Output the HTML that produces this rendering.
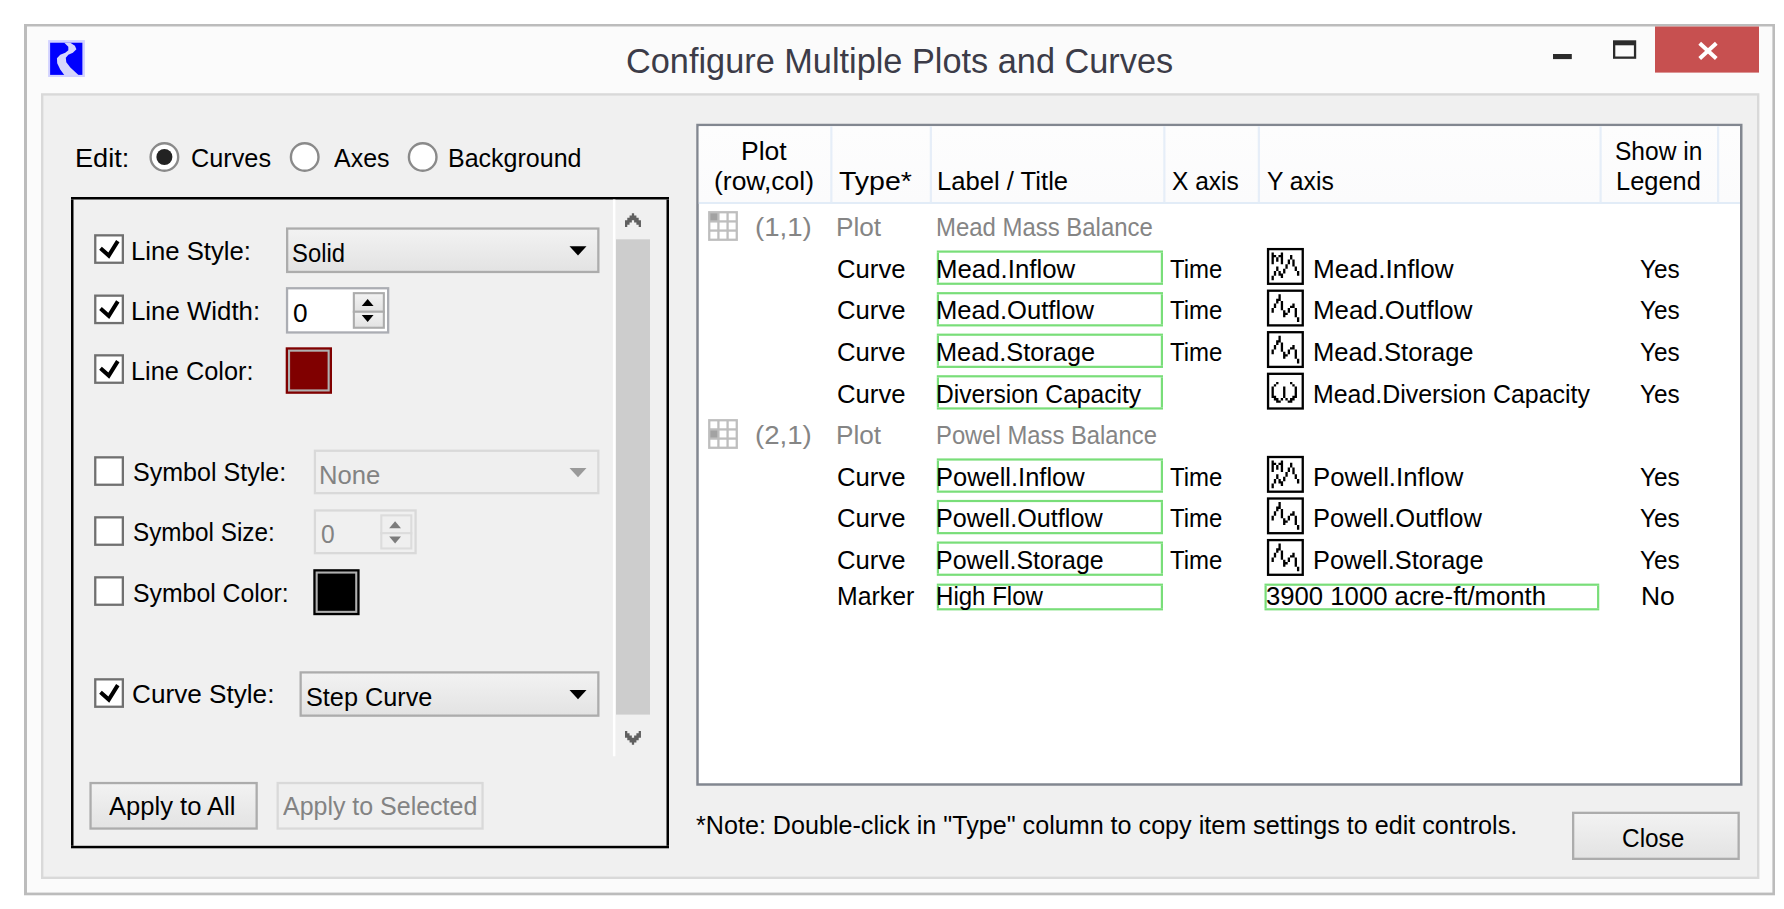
<!DOCTYPE html>
<html lang="en"><head><meta charset="utf-8"><title>Configure Multiple Plots and Curves</title>
<style>
html,body{margin:0;padding:0;background:#fff}
body{width:1784px;height:909px;position:relative;overflow:hidden;font-family:"Liberation Sans",sans-serif}
#w{position:absolute;left:0;top:0;width:1784px;height:909px;background:#fff}
svg{position:absolute;left:0;top:0;display:block}
.t{position:absolute;display:block;white-space:pre;line-height:1;font-size:26px;color:#000;transform-origin:0 0}
</style></head><body>
<div id="w"><svg width="1784" height="909" viewBox="0 0 1784 909">
<defs><linearGradient id="bg" x1="0" y1="0" x2="0" y2="1"><stop offset="0" stop-color="#f2f2f2"/><stop offset="1" stop-color="#e3e3e3"/></linearGradient>
<linearGradient id="hd" x1="0" y1="0" x2="0" y2="1"><stop offset="0" stop-color="#fdfdfd"/><stop offset="1" stop-color="#fbfbfc"/></linearGradient>
</defs>
<rect x="24.00" y="24.00" width="1751.00" height="871.30" fill="#bcbcbc"/>
<rect x="27.00" y="26.50" width="1745.40" height="866.10" fill="#fbfbfb"/>
<rect x="41.00" y="93.20" width="1718.40" height="785.80" fill="#d9d9d9"/>
<rect x="43.40" y="95.60" width="1713.60" height="781.00" fill="#f0f0f0"/>
<g transform="translate(48.1,40.1) scale(0.05055)"><rect width="728" height="730" fill="#d2d2ff"/><rect x="40" y="52" width="638" height="636" fill="#0000fe"/><path transform="translate(-160,-120)" d="M480,172 L600,172 L690,230 L720,300 L650,370 L560,410 L510,470 L520,560 L600,660 L760,808 L480,808 L400,700 L340,580 L335,480 L400,410 L500,370 L560,320 L560,250 Z" fill="#d6d6fc"/></g>
<rect x="1553.00" y="54.00" width="18.80" height="5.10" fill="#2b2b2b"/>
<rect x="1613.00" y="40.30" width="23.20" height="18.50" fill="#2b2b2b"/>
<rect x="1615.30" y="45.30" width="18.60" height="11.20" fill="#fbfbfb"/>
<rect x="1655.00" y="26.50" width="104.00" height="46.10" fill="#c75050"/>
<path d="M1699.7,43.3 L1716.3,58.5 M1716.3,43.3 L1699.7,58.5" stroke="#fff" stroke-width="4" fill="none"/>
<circle cx="164.4" cy="157" r="13.8" fill="#fff" stroke="#8a8a8a" stroke-width="2.4"/>
<circle cx="164.4" cy="157" r="8" fill="#222"/>
<circle cx="304.7" cy="157" r="13.8" fill="#fff" stroke="#8a8a8a" stroke-width="2.4"/>
<circle cx="422.7" cy="157" r="13.8" fill="#fff" stroke="#8a8a8a" stroke-width="2.4"/>
<rect x="71.00" y="197.00" width="598.00" height="2.50" fill="#000"/>
<rect x="71.00" y="845.80" width="598.00" height="2.50" fill="#000"/>
<rect x="71.00" y="199.50" width="2.50" height="646.30" fill="#000"/>
<rect x="666.50" y="199.50" width="2.50" height="646.30" fill="#000"/>
<rect x="612.90" y="199.50" width="2.50" height="556.80" fill="#fff"/>
<rect x="616.00" y="239.30" width="34.00" height="475.30" fill="#cdcdcd"/>
<path transform="translate(625.0,213.2) scale(2.28,2.31)" d="M3,0h1v1h1v1h1v1h1v3h-1v-1h-1v-1h-1v-1h-1v1h-1v1h-1v1h-1v-3h1v-1h1v-1h1z" fill="#606060"/>
<path transform="translate(625.0,744.8) scale(2.28,-2.31)" d="M3,0h1v1h1v1h1v1h1v3h-1v-1h-1v-1h-1v-1h-1v1h-1v1h-1v1h-1v-3h1v-1h1v-1h1z" fill="#606060"/>
<rect x="94.10" y="234.20" width="29.90" height="29.70" fill="#707070"/>
<rect x="96.40" y="236.50" width="25.30" height="25.10" fill="#fff"/>
<path transform="translate(94.1,234.20)" d="M6.4,14.0 L14.7,21.4 L23.7,6.9" stroke="#000" stroke-width="4" fill="none"/>
<rect x="286.00" y="227.40" width="313.50" height="45.70" fill="#acacac"/>
<rect x="288.30" y="229.70" width="308.90" height="41.10" fill="url(#bg)"/>
<path d="M569.50,246.25 h17 l-8.5,9.2 z" fill="#000"/>
<rect x="94.10" y="294.50" width="29.90" height="29.70" fill="#707070"/>
<rect x="96.40" y="296.80" width="25.30" height="25.10" fill="#fff"/>
<path transform="translate(94.1,294.50)" d="M6.4,14.0 L14.7,21.4 L23.7,6.9" stroke="#000" stroke-width="4" fill="none"/>
<rect x="285.90" y="287.10" width="103.40" height="46.50" fill="#abadb3"/>
<rect x="288.20" y="289.40" width="98.80" height="41.90" fill="#fff"/>
<rect x="352.80" y="292.10" width="32.10" height="20.80" fill="#acacac"/>
<rect x="354.90" y="294.20" width="27.90" height="16.60" fill="url(#bg)"/>
<rect x="352.80" y="310.70" width="32.10" height="18.10" fill="#acacac"/>
<rect x="354.90" y="312.80" width="27.90" height="13.90" fill="url(#bg)"/>
<path d="M361.75,306.00 h11.8 l-5.9,-6.9 z" fill="#000"/>
<path d="M361.75,315.10 h11.8 l-5.9,6.9 z" fill="#000"/>
<rect x="94.10" y="354.20" width="29.90" height="29.70" fill="#707070"/>
<rect x="96.40" y="356.50" width="25.30" height="25.10" fill="#fff"/>
<path transform="translate(94.1,354.20)" d="M6.4,14.0 L14.7,21.4 L23.7,6.9" stroke="#000" stroke-width="4" fill="none"/>
<rect x="285.70" y="347.30" width="46.30" height="46.50" fill="#800000"/>
<rect x="288.00" y="349.60" width="41.70" height="41.90" fill="#b0b0b0"/>
<rect x="290.10" y="351.70" width="37.50" height="37.70" fill="#800000"/>
<rect x="94.10" y="456.20" width="29.90" height="29.70" fill="#707070"/>
<rect x="96.40" y="458.50" width="25.30" height="25.10" fill="#fff"/>
<rect x="313.75" y="449.60" width="285.75" height="44.70" fill="#d9d9d9"/>
<rect x="316.05" y="451.90" width="281.15" height="40.10" fill="#efefef"/>
<path d="M569.50,467.95 h17 l-8.5,9.2 z" fill="#9a9a9a"/>
<rect x="94.10" y="516.20" width="29.90" height="29.70" fill="#707070"/>
<rect x="96.40" y="518.50" width="25.30" height="25.10" fill="#fff"/>
<rect x="313.75" y="509.30" width="103.00" height="45.00" fill="#d9d9d9"/>
<rect x="316.05" y="511.60" width="98.40" height="40.40" fill="#f0f0f0"/>
<rect x="380.25" y="514.30" width="32.10" height="20.05" fill="#dcdcdc"/>
<rect x="382.35" y="516.40" width="27.90" height="15.85" fill="#efefef"/>
<rect x="380.25" y="532.15" width="32.10" height="17.35" fill="#dcdcdc"/>
<rect x="382.35" y="534.25" width="27.90" height="13.15" fill="#efefef"/>
<path d="M389.20,528.20 h11.8 l-5.9,-6.9 z" fill="#7c7c7c"/>
<path d="M389.20,536.55 h11.8 l-5.9,6.9 z" fill="#7c7c7c"/>
<rect x="94.10" y="576.20" width="29.90" height="29.70" fill="#707070"/>
<rect x="96.40" y="578.50" width="25.30" height="25.10" fill="#fff"/>
<rect x="313.30" y="569.20" width="46.30" height="46.00" fill="#000"/>
<rect x="315.60" y="571.50" width="41.70" height="41.40" fill="#b0b0b0"/>
<rect x="317.70" y="573.60" width="37.50" height="37.20" fill="#000"/>
<rect x="94.10" y="678.20" width="29.90" height="29.70" fill="#707070"/>
<rect x="96.40" y="680.50" width="25.30" height="25.10" fill="#fff"/>
<path transform="translate(94.1,678.20)" d="M6.4,14.0 L14.7,21.4 L23.7,6.9" stroke="#000" stroke-width="4" fill="none"/>
<rect x="299.50" y="671.25" width="300.00" height="45.55" fill="#acacac"/>
<rect x="301.80" y="673.55" width="295.40" height="40.95" fill="url(#bg)"/>
<path d="M569.50,690.02 h17 l-8.5,9.2 z" fill="#000"/>
<rect x="89.40" y="781.90" width="168.40" height="47.80" fill="#acacac"/>
<rect x="91.70" y="784.20" width="163.80" height="43.20" fill="url(#bg)"/>
<rect x="276.50" y="781.90" width="207.20" height="47.80" fill="#d9d9d9"/>
<rect x="278.80" y="784.20" width="202.60" height="43.20" fill="#efefef"/>
<rect x="696.25" y="123.75" width="1046.25" height="662.00" fill="#828790"/>
<rect x="698.75" y="126.25" width="1041.25" height="657.00" fill="#fff"/>
<rect x="698.75" y="126.25" width="1041.25" height="75.95" fill="url(#hd)"/>
<rect x="698.75" y="202.00" width="1041.25" height="2.00" fill="#e2ecf7"/>
<rect x="830.25" y="126.25" width="2.20" height="75.85" fill="#e6eef8"/>
<rect x="929.75" y="126.25" width="2.20" height="75.85" fill="#e6eef8"/>
<rect x="1163.25" y="126.25" width="2.20" height="75.85" fill="#e6eef8"/>
<rect x="1257.75" y="126.25" width="2.20" height="75.85" fill="#e6eef8"/>
<rect x="1599.50" y="126.25" width="2.20" height="75.85" fill="#e6eef8"/>
<rect x="1717.00" y="126.25" width="2.20" height="75.85" fill="#e6eef8"/>
<g transform="translate(708.10,211.10) scale(2.2923)"><rect width="13" height="13" fill="#bebebe"/><rect x="1" y="1" width="3" height="3" fill="#a2a2a2"/><rect x="5" y="1" width="3" height="3" fill="#fff"/><rect x="9" y="1" width="3" height="3" fill="#fff"/><rect x="1" y="5" width="3" height="3" fill="#fff"/><rect x="5" y="5" width="3" height="3" fill="#fff"/><rect x="9" y="5" width="3" height="3" fill="#fff"/><rect x="1" y="9" width="3" height="3" fill="#fff"/><rect x="5" y="9" width="3" height="3" fill="#fff"/><rect x="9" y="9" width="3" height="3" fill="#fff"/></g>
<g transform="translate(708.10,419.10) scale(2.2923)"><rect width="13" height="13" fill="#bebebe"/><rect x="1" y="1" width="3" height="3" fill="#fff"/><rect x="5" y="1" width="3" height="3" fill="#fff"/><rect x="9" y="1" width="3" height="3" fill="#fff"/><rect x="1" y="5" width="3" height="3" fill="#a2a2a2"/><rect x="5" y="5" width="3" height="3" fill="#fff"/><rect x="9" y="5" width="3" height="3" fill="#fff"/><rect x="1" y="9" width="3" height="3" fill="#fff"/><rect x="5" y="9" width="3" height="3" fill="#fff"/><rect x="9" y="9" width="3" height="3" fill="#fff"/></g>
<rect x="936.80" y="250.50" width="226.20" height="2.20" fill="#79de79"/>
<rect x="936.80" y="282.65" width="226.20" height="2.20" fill="#79de79"/>
<rect x="936.80" y="252.70" width="2.20" height="29.95" fill="#79de79"/>
<rect x="1160.80" y="252.70" width="2.20" height="29.95" fill="#79de79"/>
<g transform="translate(1266.90,247.95) scale(2.3125)"><rect x="0.5" y="0.5" width="15" height="15" fill="#fff" stroke="#000"/><path d="M2,2h1v5h-1zM2,12h1v2h-1zM3,3h1v1h-1zM3,10h1v2h-1zM4,4h1v2h-1zM4,8h1v2h-1zM5,3h1v1h-1zM5,10h1v2h-1zM6,2h1v5h-1zM6,11h1v2h-1zM7,9h1v2h-1zM8,7h1v2h-1zM9,5h1v2h-1zM10,3h1v2h-1zM11,5h1v3h-1zM12,8h1v2h-1zM13,10h1v2h-1z"/></g>
<rect x="936.80" y="292.10" width="226.20" height="2.20" fill="#79de79"/>
<rect x="936.80" y="324.25" width="226.20" height="2.20" fill="#79de79"/>
<rect x="936.80" y="294.30" width="2.20" height="29.95" fill="#79de79"/>
<rect x="1160.80" y="294.30" width="2.20" height="29.95" fill="#79de79"/>
<g transform="translate(1266.90,289.55) scale(2.3125)"><rect x="0.5" y="0.5" width="15" height="15" fill="#fff" stroke="#000"/><path d="M2,8h1v2h-1zM3,6h1v2h-1zM4,4h1v2h-1zM5,2h1v3h-1zM6,5h1v4h-1zM7,9h1v3h-1zM8,10h1v1h-1zM9,8h1v2h-1zM10,7h1v1h-1zM11,6h1v2h-1zM12,8h1v4h-1zM13,12h1v2h-1z"/></g>
<rect x="936.80" y="333.60" width="226.20" height="2.20" fill="#79de79"/>
<rect x="936.80" y="365.75" width="226.20" height="2.20" fill="#79de79"/>
<rect x="936.80" y="335.80" width="2.20" height="29.95" fill="#79de79"/>
<rect x="1160.80" y="335.80" width="2.20" height="29.95" fill="#79de79"/>
<g transform="translate(1266.90,331.05) scale(2.3125)"><rect x="0.5" y="0.5" width="15" height="15" fill="#fff" stroke="#000"/><path d="M2,8h1v2h-1zM3,6h1v2h-1zM4,4h1v2h-1zM5,2h1v3h-1zM6,5h1v4h-1zM7,9h1v3h-1zM8,10h1v1h-1zM9,8h1v2h-1zM10,7h1v1h-1zM11,6h1v2h-1zM12,8h1v4h-1zM13,12h1v2h-1z"/></g>
<rect x="936.80" y="375.20" width="226.20" height="2.20" fill="#79de79"/>
<rect x="936.80" y="407.35" width="226.20" height="2.20" fill="#79de79"/>
<rect x="936.80" y="377.40" width="2.20" height="29.95" fill="#79de79"/>
<rect x="1160.80" y="377.40" width="2.20" height="29.95" fill="#79de79"/>
<g transform="translate(1266.90,372.65) scale(2.3125)"><rect x="0.5" y="0.5" width="15" height="15" fill="#fff" stroke="#000"/><path d="M2,6h1v5h-1zM3,5h1v1h-1zM3,10h1v2h-1zM4,4h1v1h-1zM4,11h1v2h-1zM5,12h1v1h-1zM6,11h1v1h-1zM7,6h1v5h-1zM8,11h1v1h-1zM9,12h1v1h-1zM10,4h1v1h-1zM10,11h1v2h-1zM11,5h1v1h-1zM11,10h1v2h-1zM12,6h1v5h-1z"/></g>
<rect x="936.80" y="458.40" width="226.20" height="2.20" fill="#79de79"/>
<rect x="936.80" y="490.55" width="226.20" height="2.20" fill="#79de79"/>
<rect x="936.80" y="460.60" width="2.20" height="29.95" fill="#79de79"/>
<rect x="1160.80" y="460.60" width="2.20" height="29.95" fill="#79de79"/>
<g transform="translate(1266.90,455.85) scale(2.3125)"><rect x="0.5" y="0.5" width="15" height="15" fill="#fff" stroke="#000"/><path d="M2,2h1v5h-1zM2,12h1v2h-1zM3,3h1v1h-1zM3,10h1v2h-1zM4,4h1v2h-1zM4,8h1v2h-1zM5,3h1v1h-1zM5,10h1v2h-1zM6,2h1v5h-1zM6,11h1v2h-1zM7,9h1v2h-1zM8,7h1v2h-1zM9,5h1v2h-1zM10,3h1v2h-1zM11,5h1v3h-1zM12,8h1v2h-1zM13,10h1v2h-1z"/></g>
<rect x="936.80" y="499.90" width="226.20" height="2.20" fill="#79de79"/>
<rect x="936.80" y="532.05" width="226.20" height="2.20" fill="#79de79"/>
<rect x="936.80" y="502.10" width="2.20" height="29.95" fill="#79de79"/>
<rect x="1160.80" y="502.10" width="2.20" height="29.95" fill="#79de79"/>
<g transform="translate(1266.90,497.35) scale(2.3125)"><rect x="0.5" y="0.5" width="15" height="15" fill="#fff" stroke="#000"/><path d="M2,8h1v2h-1zM3,6h1v2h-1zM4,4h1v2h-1zM5,2h1v3h-1zM6,5h1v4h-1zM7,9h1v3h-1zM8,10h1v1h-1zM9,8h1v2h-1zM10,7h1v1h-1zM11,6h1v2h-1zM12,8h1v4h-1zM13,12h1v2h-1z"/></g>
<rect x="936.80" y="541.50" width="226.20" height="2.20" fill="#79de79"/>
<rect x="936.80" y="573.65" width="226.20" height="2.20" fill="#79de79"/>
<rect x="936.80" y="543.70" width="2.20" height="29.95" fill="#79de79"/>
<rect x="1160.80" y="543.70" width="2.20" height="29.95" fill="#79de79"/>
<g transform="translate(1266.90,538.95) scale(2.3125)"><rect x="0.5" y="0.5" width="15" height="15" fill="#fff" stroke="#000"/><path d="M2,8h1v2h-1zM3,6h1v2h-1zM4,4h1v2h-1zM5,2h1v3h-1zM6,5h1v4h-1zM7,9h1v3h-1zM8,10h1v1h-1zM9,8h1v2h-1zM10,7h1v1h-1zM11,6h1v2h-1zM12,8h1v4h-1zM13,12h1v2h-1z"/></g>
<rect x="936.80" y="583.60" width="226.20" height="2.20" fill="#79de79"/>
<rect x="936.80" y="608.20" width="226.20" height="2.20" fill="#79de79"/>
<rect x="936.80" y="585.80" width="2.20" height="22.40" fill="#79de79"/>
<rect x="1160.80" y="585.80" width="2.20" height="22.40" fill="#79de79"/>
<rect x="1264.50" y="583.60" width="334.75" height="2.20" fill="#79de79"/>
<rect x="1264.50" y="608.20" width="334.75" height="2.20" fill="#79de79"/>
<rect x="1264.50" y="585.80" width="2.20" height="22.40" fill="#79de79"/>
<rect x="1597.05" y="585.80" width="2.20" height="22.40" fill="#79de79"/>
<rect x="1572.00" y="811.70" width="167.80" height="48.30" fill="#acacac"/>
<rect x="1574.30" y="814.00" width="163.20" height="43.70" fill="url(#bg)"/>
</svg>
<span class="t" style="left:625.88px;top:42.80px;transform:scaleX(0.9747);font-size:35.2px;color:#3c3c48">Configure Multiple Plots and Curves</span>
<span class="t" style="left:74.63px;top:145.09px;transform:scaleX(1.0435)">Edit:</span>
<span class="t" style="left:191.04px;top:145.09px;transform:scaleX(0.9720)">Curves</span>
<span class="t" style="left:333.55px;top:145.09px;transform:scaleX(0.9609)">Axes</span>
<span class="t" style="left:447.80px;top:145.09px;transform:scaleX(0.9622)">Background</span>
<span class="t" style="left:131.24px;top:238.09px;transform:scaleX(0.9885)">Line Style:</span>
<span class="t" style="left:292.48px;top:239.89px;transform:scaleX(0.9165)">Solid</span>
<span class="t" style="left:131.24px;top:297.89px;transform:scaleX(0.9925)">Line Width:</span>
<span class="t" style="left:293.42px;top:299.99px;transform:scaleX(1.0096)">0</span>
<span class="t" style="left:131.27px;top:357.59px;transform:scaleX(0.9741)">Line Color:</span>
<span class="t" style="left:132.57px;top:459.09px;transform:scaleX(0.9632)">Symbol Style:</span>
<span class="t" style="left:318.75px;top:461.59px;transform:scaleX(0.9863);color:#838383">None</span>
<span class="t" style="left:132.61px;top:519.19px;transform:scaleX(0.9345)">Symbol Size:</span>
<span class="t" style="left:321.48px;top:521.39px;transform:scaleX(0.9455);color:#838383">0</span>
<span class="t" style="left:132.58px;top:579.69px;transform:scaleX(0.9539)">Symbol Color:</span>
<span class="t" style="left:132.39px;top:680.99px;transform:scaleX(1.0056)">Curve Style:</span>
<span class="t" style="left:306.16px;top:683.59px;transform:scaleX(0.9715)">Step Curve</span>
<span class="t" style="left:109.40px;top:793.39px;transform:scaleX(0.9831)">Apply to All</span>
<span class="t" style="left:282.90px;top:793.39px;transform:scaleX(0.9600);color:#838383">Apply to Selected</span>
<span class="t" style="left:741.28px;top:137.89px;transform:scaleX(1.0194)">Plot</span>
<span class="t" style="left:713.61px;top:168.19px;transform:scaleX(1.0179)">(row,col)</span>
<span class="t" style="left:838.73px;top:168.19px;transform:scaleX(1.0963)">Type*</span>
<span class="t" style="left:936.50px;top:168.19px;transform:scaleX(0.9858)">Label / Title</span>
<span class="t" style="left:1171.75px;top:168.19px;transform:scaleX(0.9439)">X axis</span>
<span class="t" style="left:1267.31px;top:168.19px;transform:scaleX(0.9492)">Y axis</span>
<span class="t" style="left:1615.45px;top:137.89px;transform:scaleX(0.9437)">Show in</span>
<span class="t" style="left:1616.27px;top:168.19px;transform:scaleX(0.9777)">Legend</span>
<span class="t" style="left:755.14px;top:214.09px;transform:scaleX(1.0614);color:#858585">(1,1)</span>
<span class="t" style="left:836.45px;top:214.09px;transform:scaleX(1.0076);color:#858585">Plot</span>
<span class="t" style="left:936.14px;top:214.09px;transform:scaleX(0.9205);color:#858585">Mead Mass Balance</span>
<span class="t" style="left:755.14px;top:422.19px;transform:scaleX(1.0614);color:#858585">(2,1)</span>
<span class="t" style="left:836.45px;top:422.19px;transform:scaleX(1.0076);color:#858585">Plot</span>
<span class="t" style="left:936.15px;top:422.19px;transform:scaleX(0.9156);color:#858585">Powel Mass Balance</span>
<span class="t" style="left:837.27px;top:255.89px;transform:scaleX(0.9881)">Curve</span>
<span class="t" style="left:935.99px;top:255.89px;transform:scaleX(0.9925)">Mead.Inflow</span>
<span class="t" style="left:1170.07px;top:255.89px;transform:scaleX(0.9224)">Time</span>
<span class="t" style="left:1313.21px;top:255.89px;transform:scaleX(1.0033)">Mead.Inflow</span>
<span class="t" style="left:1639.81px;top:255.89px;transform:scaleX(0.9362)">Yes</span>
<span class="t" style="left:837.27px;top:297.49px;transform:scaleX(0.9881)">Curve</span>
<span class="t" style="left:936.00px;top:297.49px;transform:scaleX(0.9842)">Mead.Outflow</span>
<span class="t" style="left:1170.07px;top:297.49px;transform:scaleX(0.9224)">Time</span>
<span class="t" style="left:1313.23px;top:297.49px;transform:scaleX(0.9937)">Mead.Outflow</span>
<span class="t" style="left:1639.81px;top:297.49px;transform:scaleX(0.9362)">Yes</span>
<span class="t" style="left:837.27px;top:338.99px;transform:scaleX(0.9881)">Curve</span>
<span class="t" style="left:936.02px;top:338.99px;transform:scaleX(0.9738)">Mead.Storage</span>
<span class="t" style="left:1170.07px;top:338.99px;transform:scaleX(0.9224)">Time</span>
<span class="t" style="left:1313.26px;top:338.99px;transform:scaleX(0.9832)">Mead.Storage</span>
<span class="t" style="left:1639.81px;top:338.99px;transform:scaleX(0.9362)">Yes</span>
<span class="t" style="left:837.27px;top:380.59px;transform:scaleX(0.9881)">Curve</span>
<span class="t" style="left:936.08px;top:380.59px;transform:scaleX(0.9462)">Diversion Capacity</span>
<span class="t" style="left:1313.31px;top:380.59px;transform:scaleX(0.9581)">Mead.Diversion Capacity</span>
<span class="t" style="left:1639.81px;top:380.59px;transform:scaleX(0.9362)">Yes</span>
<span class="t" style="left:837.27px;top:463.79px;transform:scaleX(0.9881)">Curve</span>
<span class="t" style="left:936.01px;top:463.79px;transform:scaleX(0.9792)">Powell.Inflow</span>
<span class="t" style="left:1170.07px;top:463.79px;transform:scaleX(0.9224)">Time</span>
<span class="t" style="left:1313.24px;top:463.79px;transform:scaleX(0.9903)">Powell.Inflow</span>
<span class="t" style="left:1639.81px;top:463.79px;transform:scaleX(0.9362)">Yes</span>
<span class="t" style="left:837.27px;top:505.29px;transform:scaleX(0.9881)">Curve</span>
<span class="t" style="left:936.04px;top:505.29px;transform:scaleX(0.9687)">Powell.Outflow</span>
<span class="t" style="left:1170.07px;top:505.29px;transform:scaleX(0.9224)">Time</span>
<span class="t" style="left:1313.26px;top:505.29px;transform:scaleX(0.9819)">Powell.Outflow</span>
<span class="t" style="left:1639.81px;top:505.29px;transform:scaleX(0.9362)">Yes</span>
<span class="t" style="left:837.27px;top:546.89px;transform:scaleX(0.9881)">Curve</span>
<span class="t" style="left:936.05px;top:546.89px;transform:scaleX(0.9591)">Powell.Storage</span>
<span class="t" style="left:1170.07px;top:546.89px;transform:scaleX(0.9224)">Time</span>
<span class="t" style="left:1313.27px;top:546.89px;transform:scaleX(0.9752)">Powell.Storage</span>
<span class="t" style="left:1639.81px;top:546.89px;transform:scaleX(0.9362)">Yes</span>
<span class="t" style="left:836.56px;top:583.39px;transform:scaleX(0.9555)">Marker</span>
<span class="t" style="left:936.13px;top:583.39px;transform:scaleX(0.9255)">High Flow</span>
<span class="t" style="left:1266.34px;top:583.39px;transform:scaleX(0.9883)">3900 1000 acre-ft/month</span>
<span class="t" style="left:1641.43px;top:583.39px;transform:scaleX(1.0184)">No</span>
<span class="t" style="left:696.22px;top:812.49px;transform:scaleX(0.9668)">*Note: Double-click in "Type" column to copy item settings to edit controls.</span>
<span class="t" style="left:1621.88px;top:824.59px;transform:scaleX(0.9387)">Close</span>
</div>
</body></html>
